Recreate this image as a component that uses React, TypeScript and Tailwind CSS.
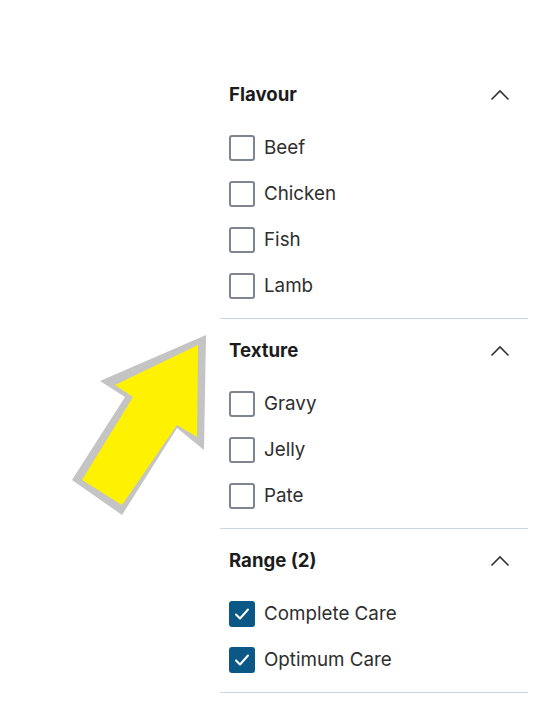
import React, { useState } from 'react';

type Section = {
  title: string;
  options: { label: string; checked: boolean }[];
};

const sections: Section[] = [
  {
    title: 'Flavour',
    options: [
      { label: 'Beef', checked: false },
      { label: 'Chicken', checked: false },
      { label: 'Fish', checked: false },
      { label: 'Lamb', checked: false },
    ],
  },
  {
    title: 'Texture',
    options: [
      { label: 'Gravy', checked: false },
      { label: 'Jelly', checked: false },
      { label: 'Pate', checked: false },
    ],
  },
  {
    title: 'Range (2)',
    options: [
      { label: 'Complete Care', checked: true },
      { label: 'Optimum Care', checked: true },
    ],
  },
];

const ChevronUp = () => (
  <svg width="20" height="12" viewBox="0 0 20 12" fill="none" className="text-[#333]">
    <path d="M1.5 10.5 L10 2 L18.5 10.5" stroke="currentColor" strokeWidth="1.6" />
  </svg>
);

const Checkbox = ({ checked }: { checked: boolean }) =>
  checked ? (
    <span className="flex h-[26px] w-[26px] shrink-0 items-center justify-center rounded-[3px] bg-[#0b5786]">
      <svg width="16" height="14" viewBox="0 0 16 14" fill="none">
        <path d="M2 7.5 L6 11.5 L14 2.5" stroke="white" strokeWidth="2" strokeLinecap="round" strokeLinejoin="round" />
      </svg>
    </span>
  ) : (
    <span className="h-[26px] w-[26px] shrink-0 rounded-[3px] border-2 border-[#7d8591] bg-white" />
  );

const FilterSection = ({ section }: { section: Section }) => {
  const [open] = useState(true);
  return (
    <div className="border-b border-[#c9d7e3] pb-[19px] pt-5">
      <div className="flex h-6 items-center justify-between pl-[9px] pr-[18px]">
        <span className="text-[18.6px] font-bold text-[#1c1c1c]">{section.title}</span>
        <ChevronUp />
      </div>
      {open && (
        <ul className="mt-[28px] flex flex-col gap-5 pl-[9px]">
          {section.options.map((o) => (
            <li key={o.label} className="flex h-[26px] items-center gap-[9px]">
              <Checkbox checked={o.checked} />
              <span className="text-[18.8px] text-[#2e2e2e]">{o.label}</span>
            </li>
          ))}
        </ul>
      )}
    </div>
  );
};

export default function App() {
  return (
    <div
      className="relative h-[708px] w-[552px] bg-white"
      style={{ fontFamily: 'Inter, "Noto Sans", sans-serif' }}
    >
      <div className="flex">
        <div className="w-[220px] shrink-0" />
        <aside className="w-[308px] pt-[63px]">
          {sections.map((s) => (
            <FilterSection key={s.title} section={s} />
          ))}
        </aside>
      </div>

      <svg className="absolute left-0 top-0" width="552" height="708" viewBox="0 0 552 708" fill="none">
        <polygon
          points="206,335 204,450 177,428 122,515 72,480 125,397 100,381"
          fill="#c4c4c4"
        />
        <polygon
          points="198,345 197,437 177,425 122,505 82,480 133,397 115,385"
          fill="#fff200"
        />
      </svg>
    </div>
  );
}
